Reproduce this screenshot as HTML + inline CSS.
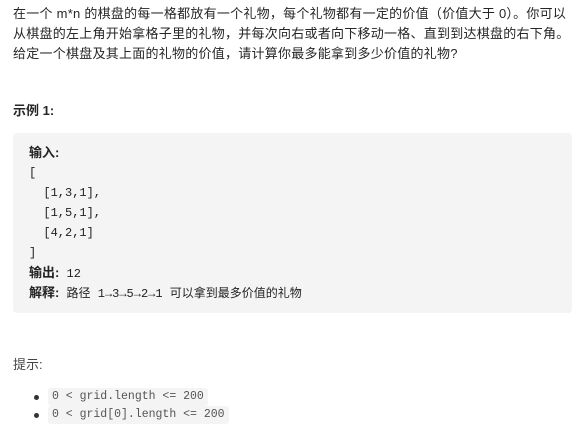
<!DOCTYPE html>
<html><head><meta charset="utf-8"><style>
body{margin:0;width:580px;height:434px;background:#fff;font-family:"Liberation Sans","Noto Sans CJK SC",sans-serif;color:#262626;font-size:13px;}
.p{position:absolute;left:13px;line-height:20px;}
.box{position:absolute;left:13px;top:133px;width:559px;height:180px;background:#f4f4f4;border-radius:4px;}
.box div{position:absolute;left:16px;font-family:"Liberation Mono","Noto Sans CJK SC",monospace;font-size:12px;line-height:20px;color:#222;}
b{font-family:"Liberation Sans","Noto Sans CJK SC",sans-serif;font-size:13px;}
.li{position:absolute;left:34px;line-height:17px;}
.li span.d{position:absolute;left:0;top:7px;width:5px;height:5px;border-radius:50%;background:#333;}
.li code{position:absolute;left:14px;top:0;background:#f4f4f4;border-radius:3px;padding:0 4px;font-family:"Liberation Mono",monospace;font-size:11.5px;color:#555;white-space:pre;height:18px;line-height:18px;}
</style></head><body>
<div class="p" style="top:4px;width:570px;letter-spacing:0.25px">在一个 m*n 的棋盘的每一格都放有一个礼物，每个礼物都有一定的价值（价值大于 0）。你可以<br>从棋盘的左上角开始拿格子里的礼物，并每次向右或者向下移动一格、直到到达棋盘的右下角。<br>给定一个棋盘及其上面的礼物的价值，请计算你最多能拿到多少价值的礼物?</div>
<div class="p" style="top:101px;font-weight:bold">示例 1:</div>
<div class="box">
<div style="top:10px"><b>输入:</b></div>
<div style="top:30px">[</div>
<div style="top:50px">&nbsp;&nbsp;[1,3,1],</div>
<div style="top:70px">&nbsp;&nbsp;[1,5,1],</div>
<div style="top:90px">&nbsp;&nbsp;[4,2,1]</div>
<div style="top:110px">]</div>
<div style="top:130px"><b>输出:</b> 12</div>
<div style="top:150px"><b>解释:</b> 路径 1→3→5→2→1 可以拿到最多价值的礼物</div>
</div>
<div class="p" style="top:355px;color:#444">提示:</div>
<div class="li" style="top:388px"><span class="d"></span><code>0 &lt; grid.length &lt;= 200</code></div>
<div class="li" style="top:406px"><span class="d"></span><code>0 &lt; grid[0].length &lt;= 200</code></div>
</body></html>
